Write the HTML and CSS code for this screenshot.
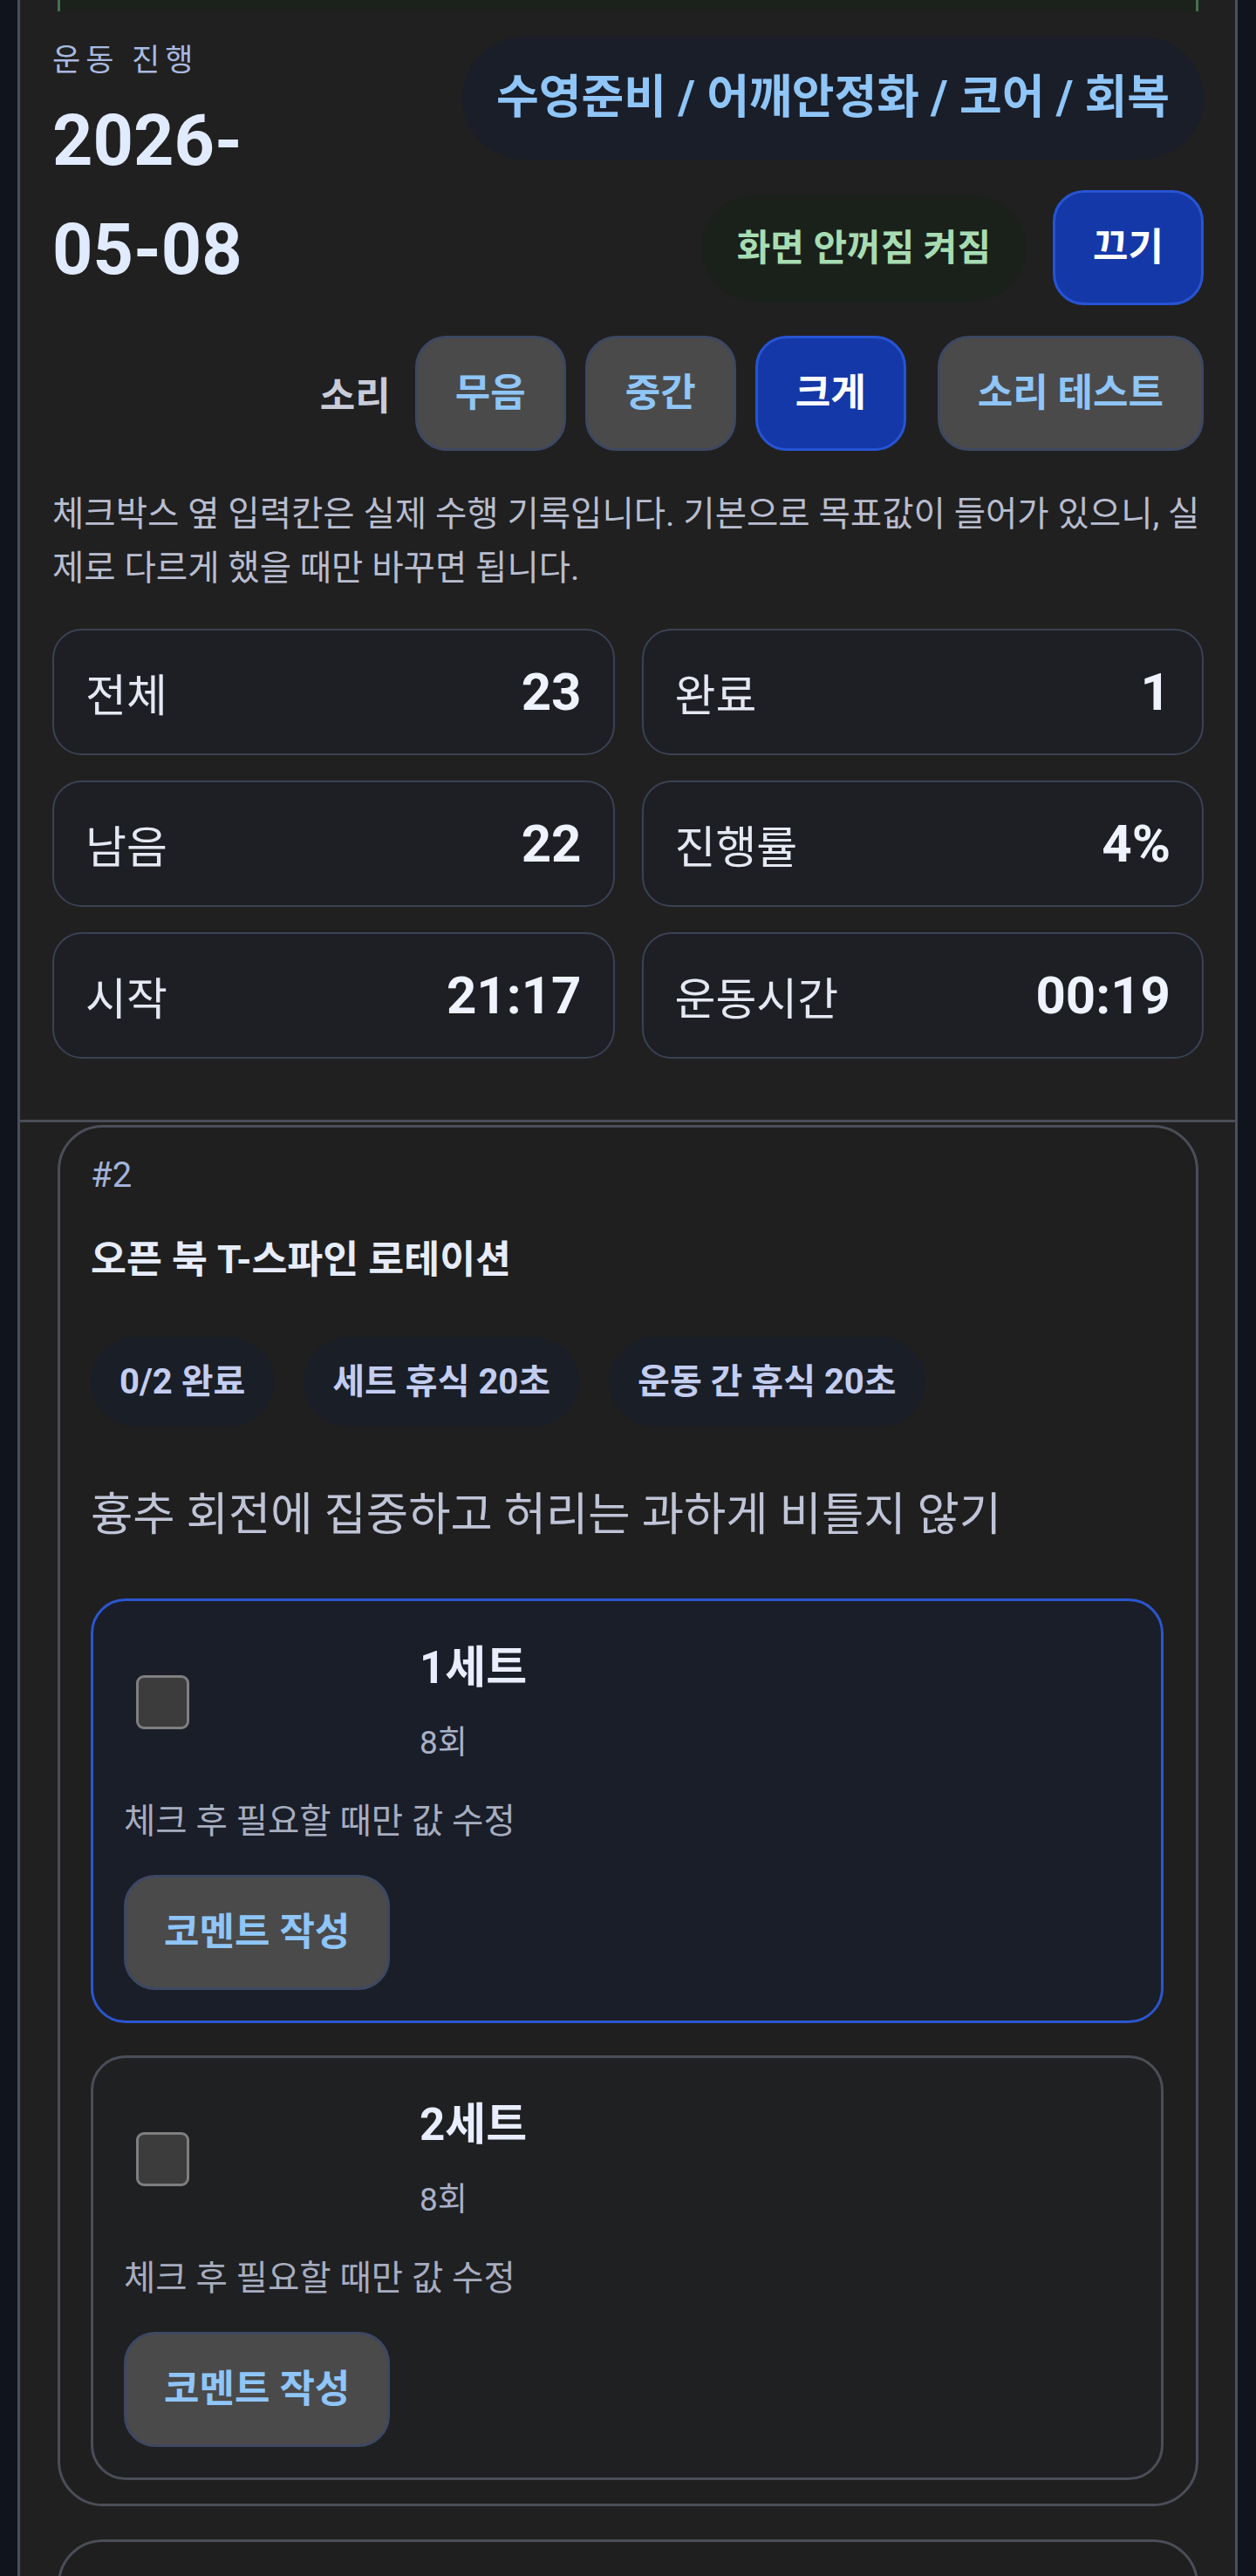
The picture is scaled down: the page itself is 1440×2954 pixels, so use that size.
FILE: index.html
```html
<!DOCTYPE html>
<html lang="ko">
<head>
    <meta charset="UTF-8">
    <meta name="viewport" content="width=device-width, initial-scale=1.0">
    <title>운동 진행</title>
    <link rel="stylesheet" href="styles.css">
</head>
<body>
    <div class="page">
        <!-- 위로 스크롤된 이전 운동 카드 -->
        <div class="card-peek"></div>

        <header class="board">
            <div class="board-top">
                <div class="board-title">
                    <p class="eyebrow">운동 진행</p>
                    <h1 class="date">2026-<wbr>05-08</h1>
                </div>
                <div class="board-actions">
                    <div class="routine-pill">수영준비 / 어깨안정화 / 코어 / 회복</div>
                    <div class="action-row">
                        <span class="wake-pill">화면 안꺼짐 켜짐</span>
                        <button class="btn btn-primary">끄기</button>
                    </div>
                    <div class="sound-row">
                        <div class="sound-group">
                            <span class="sound-label">소리</span>
                            <button class="btn">무음</button>
                            <button class="btn">중간</button>
                            <button class="btn btn-primary">크게</button>
                        </div>
                        <button class="btn">소리 테스트</button>
                    </div>
                </div>
            </div>

            <p class="help">체크박스 옆 입력칸은 실제 수행 기록입니다. 기본으로 목표값이 들어가 있으니, 실제로 다르게 했을 때만 바꾸면 됩니다.</p>

            <div class="stats">
                <div class="stat"><span class="stat-label">전체</span><strong class="stat-value">23</strong></div>
                <div class="stat"><span class="stat-label">완료</span><strong class="stat-value">1</strong></div>
                <div class="stat"><span class="stat-label">남음</span><strong class="stat-value">22</strong></div>
                <div class="stat"><span class="stat-label">진행률</span><strong class="stat-value">4%</strong></div>
                <div class="stat"><span class="stat-label">시작</span><strong class="stat-value">21:17</strong></div>
                <div class="stat"><span class="stat-label">운동시간</span><strong class="stat-value">00:19</strong></div>
            </div>
        </header>

        <main class="exercise-list">
            <section class="exercise">
                <p class="exercise-no">#2</p>
                <h2 class="exercise-name">오픈 북 T-스파인 로테이션</h2>
                <div class="chips">
                    <span class="chip">0/2 완료</span>
                    <span class="chip">세트 휴식 20초</span>
                    <span class="chip">운동 간 휴식 20초</span>
                </div>
                <p class="exercise-desc">흉추 회전에 집중하고 허리는 과하게 비틀지 않기</p>

                <div class="sets">
                    <div class="set active">
                        <div class="set-row">
                            <input type="checkbox" class="set-check">
                            <div class="set-info">
                                <div class="set-title">1세트</div>
                                <div class="set-reps">8회</div>
                            </div>
                        </div>
                        <p class="set-hint">체크 후 필요할 때만 값 수정</p>
                        <button class="btn">코멘트 작성</button>
                    </div>
                    <div class="set">
                        <div class="set-row">
                            <input type="checkbox" class="set-check">
                            <div class="set-info">
                                <div class="set-title">2세트</div>
                                <div class="set-reps">8회</div>
                            </div>
                        </div>
                        <p class="set-hint">체크 후 필요할 때만 값 수정</p>
                        <button class="btn">코멘트 작성</button>
                    </div>
                </div>
            </section>

            <section class="exercise exercise-next"></section>
        </main>
    </div>
</body>
</html>
```

FILE: styles.css
```css
* {
    margin: 0;
    padding: 0;
    box-sizing: border-box;
}

body {
    background-color: #10141c;
    font-family: Roboto, "Noto Sans CJK KR", sans-serif;
    color: #e6eaf4;
}

.page {
    width: 1399px;
    margin-left: 20px;
    min-height: 2954px;
    background-color: #202020;
    border-left: 3px solid #4b4f5b;
    border-right: 3px solid #4b4f5b;
}

.card-peek {
    height: 13px;
    margin: 0 42px 0 43px;
    background-color: #1b211b;
    border-left: 3px solid #46724b;
    border-right: 3px solid #46724b;
}

/* 상단 진행 보드 */
.board {
    padding: 29px 36px 70px 37px;
    border-bottom: 3px solid #4a4e58;
}

.board-top {
    display: flex;
    justify-content: space-between;
    gap: 30px;
}

.board-title {
    width: min-content;
    padding-top: 6px;
}

.eyebrow {
    font-size: 35px;
    line-height: 44px;
    letter-spacing: 6px;
    color: #a9b9df;
    white-space: nowrap;
}

.date {
    margin-top: 7px;
    font-size: 81px;
    line-height: 125px;
    font-weight: 700;
    color: #e1ebff;
}

.board-actions {
    flex: 1;
    display: flex;
    flex-direction: column;
    align-items: flex-end;
    gap: 35px;
}

.routine-pill {
    padding: 39px 39px;
    font-size: 53px;
    line-height: 63px;
    font-weight: 700;
    color: #8fc5f7;
    background-color: #1a1e29;
    border-radius: 999px;
    white-space: nowrap;
}

.action-row {
    display: flex;
    align-items: center;
    gap: 30px;
}

.wake-pill {
    padding: 36px 41px;
    font-size: 42px;
    line-height: 51px;
    font-weight: 700;
    color: #a7dcb2;
    background-color: #1a211a;
    border-radius: 999px;
}

.btn {
    padding: 37px 43px;
    font-family: inherit;
    font-size: 44px;
    line-height: 52px;
    font-weight: 700;
    color: #8fc5f7;
    background-color: #4a4a4a;
    border: 3px solid #3d4862;
    border-radius: 36px;
    white-space: nowrap;
}

.btn-primary {
    color: #fff;
    background-color: #1538a8;
    border-color: #2754d4;
}

.sound-row {
    display: flex;
    align-items: center;
    gap: 36px;
}

.sound-group {
    display: flex;
    align-items: center;
    gap: 22px;
}

.sound-label {
    margin-right: 6px;
    font-size: 44px;
    font-weight: 700;
    color: #c8ccd9;
}

.help {
    margin-top: 42px;
    font-size: 39.5px;
    line-height: 62px;
    color: #b8bdcf;
}

.stats {
    margin-top: 38px;
    display: grid;
    grid-template-columns: 1fr 1fr;
    gap: 29px 31px;
}

.stat {
    height: 145px;
    padding: 0 36px;
    display: flex;
    align-items: center;
    justify-content: space-between;
    background-color: #1d1f24;
    border: 2px solid #3a4254;
    border-radius: 34px;
}

.stat-label {
    font-size: 51px;
    color: #e4e8f2;
}

.stat-value {
    font-size: 60px;
    font-weight: 700;
    color: #eef3ff;
}

/* 운동 목록 */
.exercise-list {
    padding: 3px 42px 0 43px;
}

.exercise {
    padding: 27px 37px 27px 35px;
    background-color: #1f1f1f;
    border: 3px solid #4a4e58;
    border-radius: 52px;
}

.exercise + .exercise {
    margin-top: 38px;
}

.exercise-next {
    height: 400px;
}

.exercise-no {
    font-size: 40px;
    line-height: 56px;
    color: #a3b3da;
}

.exercise-name {
    margin-top: 40px;
    font-size: 44.5px;
    line-height: 58px;
    font-weight: 700;
    color: #e6ecfa;
}

.chips {
    margin-top: 59px;
    display: flex;
    gap: 34px;
}

.chip {
    padding: 27.5px 33px;
    font-size: 40px;
    line-height: 48px;
    font-weight: 700;
    color: #c3cdf0;
    background-color: #1a1e27;
    border-radius: 999px;
}

.exercise-desc {
    margin-top: 68px;
    font-size: 52.5px;
    line-height: 66px;
    color: #bfc5d7;
}

.sets {
    margin-top: 63px;
    display: flex;
    flex-direction: column;
    gap: 37px;
}

.set {
    padding: 44px 35px 35px;
    display: flex;
    flex-direction: column;
    align-items: flex-start;
    background-color: #1f2022;
    border: 3px solid #4a4e58;
    border-radius: 40px;
}

.set.active {
    background-color: #1a1e29;
    border-color: #2b56cf;
}

.set-row {
    width: 100%;
    display: grid;
    grid-template-columns: 339px 1fr;
    align-items: center;
}

.set-check {
    appearance: none;
    width: 61px;
    height: 62px;
    margin-left: 14px;
    background-color: #3c3c3c;
    border: 3px solid #7f7f7f;
    border-radius: 9px;
}

.set-title {
    font-size: 51px;
    line-height: 66px;
    font-weight: 700;
    color: #e8eeff;
}

.set-reps {
    margin-top: 28px;
    font-size: 37px;
    line-height: 50px;
    color: #a9b1c8;
}

.set-hint {
    margin-top: 39px;
    font-size: 39.5px;
    line-height: 52px;
    color: #a7adbf;
}

.set .btn {
    margin-top: 35px;
}
```
